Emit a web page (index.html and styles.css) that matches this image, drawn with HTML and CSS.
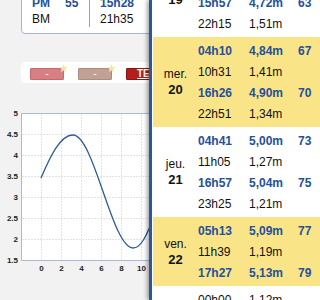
FILE: index.html
```html
<!DOCTYPE html>
<html lang="fr">
<head>
    <meta charset="UTF-8">
    <meta name="viewport" content="width=device-width, initial-scale=1.0">
    <title>Marées</title>
    <link rel="stylesheet" href="styles.css">
</head>
<body>
    <div class="page">
        <div class="summary">
            <div class="sum-grid">
                <span class="blue">PM</span><span class="blue">55</span><span class="sum-time blue">15h28</span>
                <span>BM</span><span></span><span class="sum-time">21h35</span>
            </div>
        </div>

        <div class="actions">
            <span class="btn btn-red">-<svg class="star" viewBox="0 0 10 10"><polygon points="5,0 6.2,3.4 9.8,3.5 7,5.7 8,9.2 5,7.2 2,9.2 3,5.7 0.2,3.5 3.8,3.4"/></svg></span>
            <span class="btn btn-brown">-<svg class="star" viewBox="0 0 10 10"><polygon points="5,0 6.2,3.4 9.8,3.5 7,5.7 8,9.2 5,7.2 2,9.2 3,5.7 0.2,3.5 3.8,3.4"/></svg></span>
            <span class="btn btn-dark"><u>TE</u></span>
        </div>

        <svg class="chart" viewBox="0 100 149 180" width="149" height="180">
            <rect x="21.5" y="113.5" width="140" height="147" fill="#fff"/>
            <g class="grid">
                <line x1="22" y1="134.5" x2="160" y2="134.5"/>
                <line x1="22" y1="155.5" x2="160" y2="155.5"/>
                <line x1="22" y1="176.5" x2="160" y2="176.5"/>
                <line x1="22" y1="197.5" x2="160" y2="197.5"/>
                <line x1="22" y1="218.5" x2="160" y2="218.5"/>
                <line x1="22" y1="239.5" x2="160" y2="239.5"/>
                <line x1="41.5" y1="114" x2="41.5" y2="260"/>
                <line x1="61.5" y1="114" x2="61.5" y2="260"/>
                <line x1="81.5" y1="114" x2="81.5" y2="260"/>
                <line x1="101.5" y1="114" x2="101.5" y2="260"/>
                <line x1="121.5" y1="114" x2="121.5" y2="260"/>
                <line x1="141.5" y1="114" x2="141.5" y2="260"/>
            </g>
            <path class="axis" d="M160,113.5 H21.5 V260.5 H160"/>
            <path class="curve" d="M41,178 C50,157 60,135 73,135 C94,135 112,248 133,248 C141,248 146,236 152,222"/>
            <g class="ylabels">
                <text x="18" y="116">5</text>
                <text x="18" y="137">4.5</text>
                <text x="18" y="158">4</text>
                <text x="18" y="179">3.5</text>
                <text x="18" y="200">3</text>
                <text x="18" y="221">2.5</text>
                <text x="18" y="242">2</text>
                <text x="18" y="263">1.5</text>
            </g>
            <g class="xlabels">
                <text x="41.5" y="271">0</text>
                <text x="61.5" y="271">2</text>
                <text x="81.5" y="271">4</text>
                <text x="101.5" y="271">6</text>
                <text x="121.5" y="271">8</text>
                <text x="141.5" y="271">10</text>
            </g>
        </svg>
    </div>

    <div class="panel">
        <div class="days">
            <div class="day">
                <div class="day-name">mar.<b>19</b></div>
                <div class="tides">
                    <span class="blue">03h39</span><span class="blue">4,58m</span><span class="blue">60</span>
                    <span>09h56</span><span>1,60m</span><span></span>
                    <span class="blue">15h57</span><span class="blue">4,72m</span><span class="blue">63</span>
                    <span>22h15</span><span>1,51m</span><span></span>
                </div>
            </div>
            <div class="day alt">
                <div class="day-name">mer.<b>20</b></div>
                <div class="tides">
                    <span class="blue">04h10</span><span class="blue">4,84m</span><span class="blue">67</span>
                    <span>10h31</span><span>1,41m</span><span></span>
                    <span class="blue">16h26</span><span class="blue">4,90m</span><span class="blue">70</span>
                    <span>22h51</span><span>1,34m</span><span></span>
                </div>
            </div>
            <div class="day">
                <div class="day-name">jeu.<b>21</b></div>
                <div class="tides">
                    <span class="blue">04h41</span><span class="blue">5,00m</span><span class="blue">73</span>
                    <span>11h05</span><span>1,27m</span><span></span>
                    <span class="blue">16h57</span><span class="blue">5,04m</span><span class="blue">75</span>
                    <span>23h25</span><span>1,21m</span><span></span>
                </div>
            </div>
            <div class="day alt">
                <div class="day-name">ven.<b>22</b></div>
                <div class="tides">
                    <span class="blue">05h13</span><span class="blue">5,09m</span><span class="blue">77</span>
                    <span>11h39</span><span>1,19m</span><span></span>
                    <span class="blue">17h27</span><span class="blue">5,13m</span><span class="blue">79</span>
                </div>
            </div>
            <div class="day">
                <div class="day-name">sam.<b>23</b></div>
                <div class="tides">
                    <span>00h00</span><span>1,12m</span><span></span>
                    <span class="blue">05h45</span><span class="blue">5,14m</span><span class="blue">80</span>
                    <span>12h14</span><span>1,09m</span><span></span>
                    <span class="blue">17h58</span><span class="blue">5,17m</span><span class="blue">81</span>
                </div>
            </div>
        </div>
    </div>
</body>
</html>
```

FILE: styles.css
```css
html, body {
    margin: 0;
    height: 100%;
}
body {
    position: relative;
    overflow: hidden;
    font-family: "Liberation Sans", Arial, sans-serif;
    font-size: 12px;
    color: #111;
    background-color: #f2f2f2;
}
.blue {
    color: #24509c;
    font-weight: bold;
}
.page {
    width: 149px;
}
.summary {
    margin: -6px 0 0 21px;
    width: 150px;
    padding: 0 0 6px 10px;
    background: white;
    border: 1px solid #a9b6ca;
    border-radius: 0 0 0 4px;
}
.sum-grid {
    display: grid;
    grid-template-columns: 33px 24px 1fr;
    line-height: 16px;
}
.sum-time {
    border-left: 1px solid #8fa3bf;
    padding-left: 10px;
}
.actions {
    display: flex;
    gap: 14px;
    margin: 28px 0 0 21px;
    width: 150px;
    padding: 6px 0 3px 9px;
    background: white;
    border-radius: 4px;
}
.btn {
    position: relative;
    box-sizing: border-box;
    width: 34px;
    height: 12px;
    font-size: 10px;
    line-height: 10px;
    color: white;
    text-align: center;
    border: 1px solid;
    border-radius: 1px;
}
.btn-red {
    background-color: #d77f83;
    border-color: #c46a6f;
}
.btn-brown {
    background-color: #c2a195;
    border-color: #ad8b80;
}
.btn-dark {
    width: 40px;
    background-color: #b1201d;
    border-color: #8c1411;
    text-align: left;
    padding-left: 10px;
    font-weight: bold;
}
.star {
    position: absolute;
    right: -5px;
    top: -5px;
    width: 9px;
    height: 9px;
    fill: #f4e7a2;
}
.chart {
    display: block;
    margin-top: 17px;
}
.grid line {
    stroke: #e3e3e3;
    stroke-width: 1;
    stroke-dasharray: 2 1;
}
.axis {
    fill: none;
    stroke: #a7bbd6;
    stroke-width: 1;
}
.curve {
    fill: none;
    stroke: #2f5b9a;
    stroke-width: 1.3;
}
.chart text {
    font-family: "Liberation Sans", Arial, sans-serif;
    font-size: 8px;
    font-weight: bold;
    fill: #222;
}
.ylabels text {
    text-anchor: end;
}
.xlabels text {
    text-anchor: middle;
}
.panel {
    position: absolute;
    top: 0;
    left: 149px;
    right: 0;
    bottom: 0;
    padding-left: 1px;
    background: white;
    border-left: 3px solid #2c5896;
    box-shadow: -2px 0 4px rgba(0, 0, 0, 0.35);
}
.days {
    margin-top: -53px;
}
.day {
    display: flex;
    align-items: center;
    padding: 3px 0;
}
.day.alt {
    background-color: #fae488;
}
.day-name {
    width: 45px;
    text-align: center;
    line-height: 15px;
}
.day-name b {
    display: block;
    font-size: 13px;
}
.tides {
    flex: 1;
    display: grid;
    grid-template-columns: 51px 49px 1fr;
    grid-auto-rows: 21px;
    align-items: center;
}
```
